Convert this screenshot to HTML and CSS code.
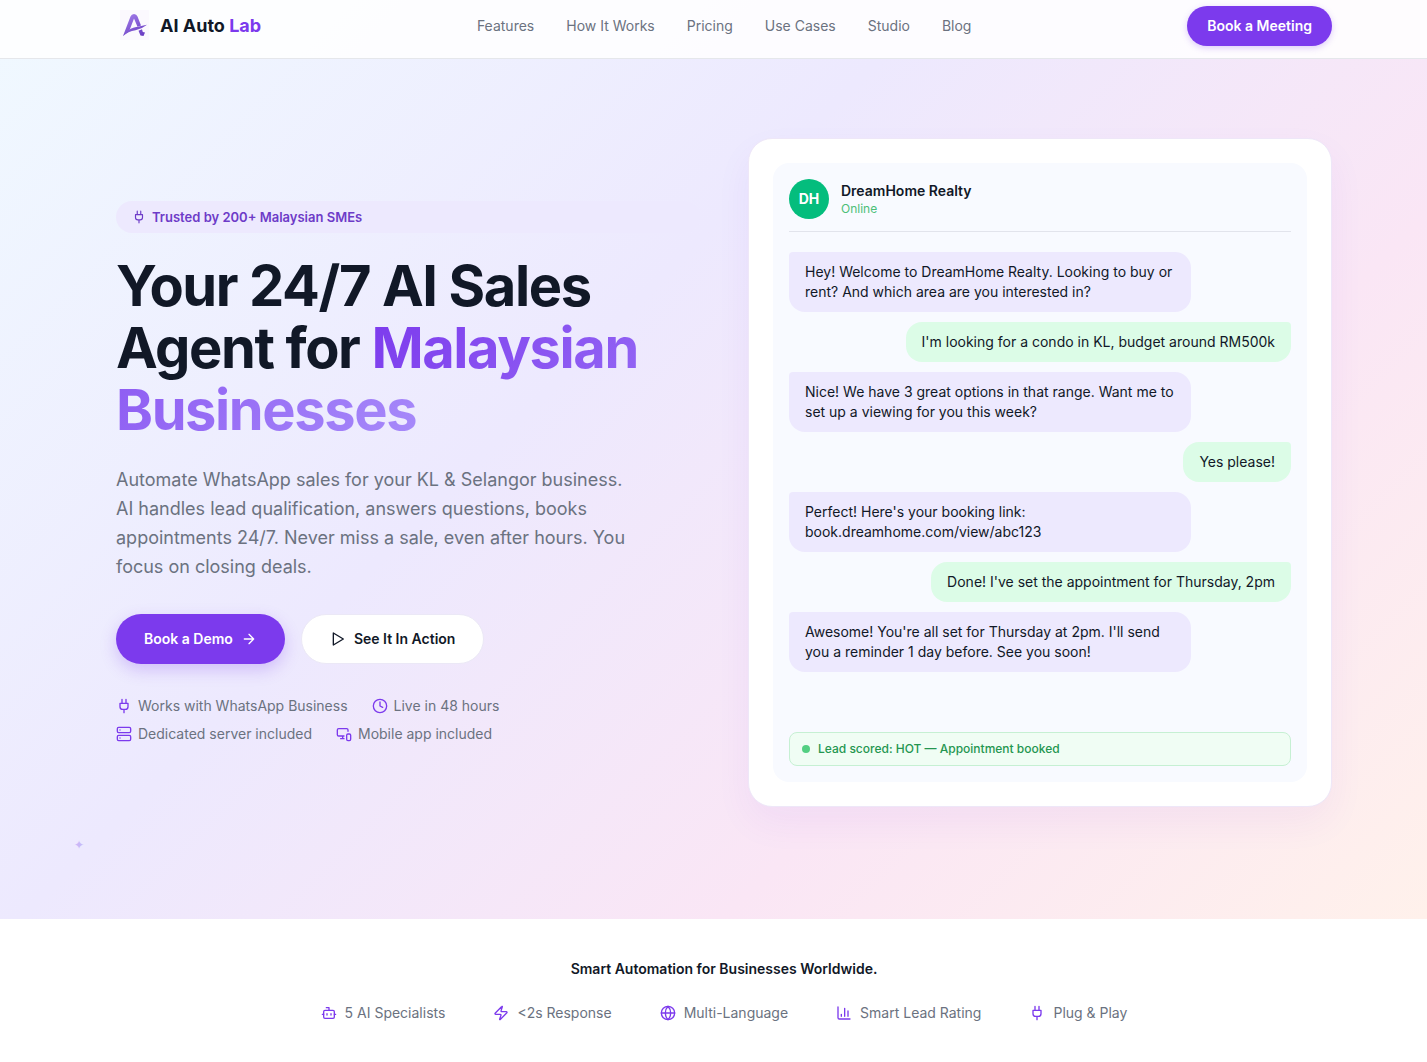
FILE: index.html
```html
<!DOCTYPE html>
<html lang="en">
<head>
<meta charset="utf-8">
<meta name="viewport" content="width=device-width, initial-scale=1">
<title>AI Auto Lab</title>
<link rel="stylesheet" href="styles.css">
</head>
<body>
<svg class="sprite" aria-hidden="true">
  <symbol id="plug" viewBox="0 0 24 24"><path d="M12 22v-5M9 8V2M15 8V2M18 8v5a4 4 0 0 1-4 4h-4a4 4 0 0 1-4-4V8Z"/></symbol>
  <symbol id="clock" viewBox="0 0 24 24"><circle cx="12" cy="12" r="10"/><path d="M12 6v6l4 2"/></symbol>
  <symbol id="server" viewBox="0 0 24 24"><rect width="20" height="8" x="2" y="2" rx="2"/><rect width="20" height="8" x="2" y="14" rx="2"/><path d="M6 6h.01M6 18h.01"/></symbol>
  <symbol id="devices" viewBox="0 0 24 24"><path d="M18 8V6a2 2 0 0 0-2-2H4a2 2 0 0 0-2 2v7a2 2 0 0 0 2 2h8M10 19v-3.96 3.15M7 19h5"/><rect width="6" height="10" x="16" y="12" rx="2"/></symbol>
  <symbol id="arrow" viewBox="0 0 24 24"><path d="M5 12h14M12 5l7 7-7 7"/></symbol>
  <symbol id="play" viewBox="0 0 24 24"><path d="M5 3l15 9-15 9z"/></symbol>
  <symbol id="bot" viewBox="0 0 24 24"><path d="M12 8V4H8"/><rect width="16" height="12" x="4" y="8" rx="2"/><path d="M2 14h2M20 14h2M15 13v2M9 13v2"/></symbol>
  <symbol id="zap" viewBox="0 0 24 24"><path d="M4 14a1 1 0 0 1-.78-1.63l9.9-10.2a.5.5 0 0 1 .86.46l-1.92 6.02A1 1 0 0 0 13 10h7a1 1 0 0 1 .78 1.63l-9.9 10.2a.5.5 0 0 1-.86-.46l1.92-6.02A1 1 0 0 0 11 14z"/></symbol>
  <symbol id="globe" viewBox="0 0 24 24"><circle cx="12" cy="12" r="10"/><path d="M12 2a14.5 14.5 0 0 0 0 20 14.5 14.5 0 0 0 0-20M2 12h20"/></symbol>
  <symbol id="chart" viewBox="0 0 24 24"><path d="M3 3v16a2 2 0 0 0 2 2h16M18 17V9M13 17V5M8 17v-3"/></symbol>
</svg>

<div class="top">
<header class="header">
  <div class="container header-row">
    <a class="brand" href="#">
      <svg class="logo" viewBox="0 0 36 36" aria-hidden="true">
        <defs><linearGradient id="logo-fill" gradientUnits="userSpaceOnUse" x1="12" y1="6" x2="24" y2="28"><stop offset="0" stop-color="#a07be8"/><stop offset="1" stop-color="#6b3fc4"/></linearGradient></defs>
        <rect x="4" y="2" width="29" height="30" fill="#fbf9fe"/>
        <g fill="url(#logo-fill)">
          <path d="M7 28 14.500 8.500Q15.500 6 18 6 20.500 6 21.500 8.500L25 17.500 21.500 18.800 18 10.500 13.800 21.500 12 24Z"/>
          <path d="M7 28Q11 21.500 18 19.500L31 16.800Q26 21 19.500 22.300 12 23.500 7 28Z"/>
          <path d="M22.500 22.800 26 21.300 26.800 24 29 24.500 27.500 28 24.500 27.500Z"/>
        </g>
      </svg>
      <span>AI Auto <span class="brand-accent">Lab</span></span>
    </a>
    <nav class="nav">
      <a href="#">Features</a>
      <a href="#">How It Works</a>
      <a href="#">Pricing</a>
      <a href="#">Use Cases</a>
      <a href="#">Studio</a>
      <a href="#">Blog</a>
    </nav>
    <button class="btn btn-small" type="button">Book a Meeting</button>
  </div>
</header>

<main class="hero">
  <div class="container hero-grid">
    <section class="intro">
      <p class="badge"><svg class="icon icon-sm"><use href="#plug"/></svg>Trusted by 200+ Malaysian SMEs</p>
      <h1 class="title">Your 24/7 AI Sales Agent for <span class="title-accent">Malaysian Businesses</span></h1>
      <p class="lead">Automate WhatsApp sales for your KL &amp; Selangor business. AI handles lead qualification, answers questions, books appointments 24/7. Never miss a sale, even after hours. You focus on closing deals.</p>
      <div class="actions">
        <button class="btn btn-primary" type="button">Book a Demo<svg class="icon"><use href="#arrow"/></svg></button>
        <button class="btn btn-light" type="button"><svg class="icon"><use href="#play"/></svg>See It In Action</button>
      </div>
      <ul class="perks">
        <li><svg class="icon"><use href="#plug"/></svg>Works with WhatsApp Business</li>
        <li><svg class="icon"><use href="#clock"/></svg>Live in 48 hours</li>
        <li><svg class="icon"><use href="#server"/></svg>Dedicated server included</li>
        <li><svg class="icon"><use href="#devices"/></svg>Mobile app included</li>
      </ul>
    </section>

    <section class="card">
      <div class="chat">
        <div class="chat-head">
          <span class="avatar">DH</span>
          <div>
            <p class="chat-name">DreamHome Realty</p>
            <p class="chat-status">Online</p>
          </div>
        </div>
        <div class="messages">
          <p class="msg">Hey! Welcome to DreamHome Realty. Looking to buy or rent? And which area are you interested in?</p>
          <p class="msg msg-out">I'm looking for a condo in KL, budget around RM500k</p>
          <p class="msg">Nice! We have 3 great options in that range. Want me to set up a viewing for you this week?</p>
          <p class="msg msg-out">Yes please!</p>
          <p class="msg">Perfect! Here's your booking link: book.dreamhome.com/view/abc123</p>
          <p class="msg msg-out">Done! I've set the appointment for Thursday, 2pm</p>
          <p class="msg">Awesome! You're all set for Thursday at 2pm. I'll send you a reminder 1 day before. See you soon!</p>
        </div>
        <p class="score"><span class="dot"></span>Lead scored: HOT — Appointment booked</p>
      </div>
    </section>
  </div>
  <span class="sparkle" aria-hidden="true">✦</span>
</main>
</div>

<footer class="strip">
  <p class="strip-title">Smart Automation for Businesses Worldwide.</p>
  <ul class="features">
    <li><svg class="icon"><use href="#bot"/></svg>5 AI Specialists</li>
    <li><svg class="icon"><use href="#zap"/></svg>&lt;2s Response</li>
    <li><svg class="icon"><use href="#globe"/></svg>Multi-Language</li>
    <li><svg class="icon"><use href="#chart"/></svg>Smart Lead Rating</li>
    <li><svg class="icon"><use href="#plug"/></svg>Plug &amp; Play</li>
  </ul>
</footer>
</body>
</html>
```
FILE: styles.css
```css
* { box-sizing: border-box; }

body {
  margin: 0;
  font-family: Inter, "Liberation Sans", sans-serif;
  font-size: 14px;
  line-height: 20px;
  color: #111827;
  background: #fff;
}

p, h1, ul { margin: 0; padding: 0; }
ul { list-style: none; }
a { color: inherit; text-decoration: none; }

.sprite { position: absolute; width: 0; height: 0; }

.icon {
  width: 16px;
  height: 16px;
  flex: none;
  fill: none;
  stroke: currentColor;
  stroke-width: 2;
  stroke-linecap: round;
  stroke-linejoin: round;
}
.icon-sm { width: 14px; height: 14px; }

.top {
  background: linear-gradient(135deg, #f0f9ff 0%, #ede9fe 40%, #fae6f5 70%, #fff1eb 100%);
}

.header, .hero, .strip { padding-left: 21px; }

.container { max-width: 1216px; margin: 0 auto; }

.header {
  padding-top: 6px;
  padding-bottom: 12px;
  background: rgba(255, 255, 255, 0.85);
  border-bottom: 1px solid #e5e7eb;
}
.header-row {
  display: flex;
  align-items: center;
  justify-content: space-between;
}

.brand {
  display: flex;
  align-items: center;
  gap: 8px;
  font-size: 18px;
  font-weight: 700;
}
.brand-accent { color: #7c3aed; }
.logo { width: 36px; height: 36px; }

.nav { display: flex; gap: 32px; color: #6b7280; }

.btn {
  display: flex;
  align-items: center;
  justify-content: center;
  gap: 8px;
  border: 0;
  border-radius: 25px;
  font: inherit;
  font-weight: 600;
  color: #fff;
  background: #7c3aed;
}
.btn-small { height: 40px; padding: 0 20px; box-shadow: 0 2px 6px rgba(124, 58, 237, 0.25); }
.btn-primary { height: 50px; padding: 0 28px; box-shadow: 0 6px 16px rgba(124, 58, 237, 0.25); }
.btn-light { height: 50px; padding: 0 28px; border: 1px solid #ebe8f6; color: #111827; background: #fff; }

.hero {
  position: relative;
  padding-top: 79px;
  padding-bottom: 112px;
}
.hero-grid {
  display: grid;
  grid-template-columns: 1fr 1fr;
  gap: 48px;
  align-items: center;
}

.badge {
  display: flex;
  align-items: center;
  gap: 6px;
  height: 32px;
  padding: 0 16px;
  border-radius: 16px;
  background: #ede9fe;
  color: #6d3bc8;
  font-size: 13px;
  font-weight: 600;
}

.title {
  margin-top: 22px;
  font-size: 56px;
  line-height: 62px;
  font-weight: 700;
  letter-spacing: -0.025em;
}
.title-accent {
  color: transparent;
  background: linear-gradient(135deg, #7c3aed, #a78bfa);
  background-clip: text;
  -webkit-background-clip: text;
}

.lead {
  max-width: 520px;
  margin-top: 24px;
  font-size: 18px;
  line-height: 29px;
  color: #6b7280;
}

.actions { display: flex; gap: 16px; margin-top: 33px; }

.perks {
  display: flex;
  flex-wrap: wrap;
  gap: 8px 24px;
  max-width: 420px;
  margin-top: 32px;
  color: #6b7280;
}
.perks li { display: flex; align-items: center; gap: 6px; }
.perks .icon, .features .icon { color: #7c3aed; }

.card {
  padding: 24px;
  border: 1px solid #eee7f8;
  border-radius: 24px;
  background: #fff;
  box-shadow: 0 16px 36px rgba(124, 58, 237, 0.06);
}
.chat {
  padding: 16px;
  border-radius: 16px;
  background: #f8faff;
}
.chat-head {
  display: flex;
  align-items: center;
  gap: 12px;
  padding-bottom: 12px;
  border-bottom: 1px solid #e2e4ec;
}
.avatar {
  display: grid;
  place-items: center;
  width: 40px;
  height: 40px;
  border-radius: 50%;
  background: #04bd7d;
  color: #fff;
  font-weight: 700;
}
.chat-name { font-weight: 600; }
.chat-status { font-size: 12px; line-height: 16px; color: #4cbf78; }

.messages {
  display: flex;
  flex-direction: column;
  align-items: flex-start;
  gap: 10px;
  min-height: 480px;
  padding-top: 20px;
}
.msg {
  width: 80%;
  padding: 10px 16px;
  border-radius: 4px 16px 16px 16px;
  background: #ede9fe;
}
.msg-out {
  align-self: flex-end;
  width: auto;
  max-width: 80%;
  border-radius: 16px 4px 16px 16px;
  background: #dcfce7;
}

.score {
  display: flex;
  align-items: center;
  gap: 8px;
  margin-top: 20px;
  height: 34px;
  padding: 0 12px;
  border: 1px solid #c6f0d3;
  border-radius: 8px;
  background: #f0fdf4;
  color: #249650;
  font-size: 12px;
  font-weight: 500;
}
.dot { width: 8px; height: 8px; border-radius: 50%; background: #53cf82; }

.sparkle {
  position: absolute;
  left: 74px;
  bottom: 64px;
  font-size: 12px;
  color: #c9b8f8;
}

.strip { padding-top: 40px; padding-bottom: 40px; }
.strip-title { text-align: center; font-weight: 600; }
.features {
  display: flex;
  flex-wrap: wrap;
  justify-content: center;
  gap: 16px 48px;
  margin-top: 24px;
  color: #6b7280;
}
.features li { display: flex; align-items: center; gap: 8px; }
```
